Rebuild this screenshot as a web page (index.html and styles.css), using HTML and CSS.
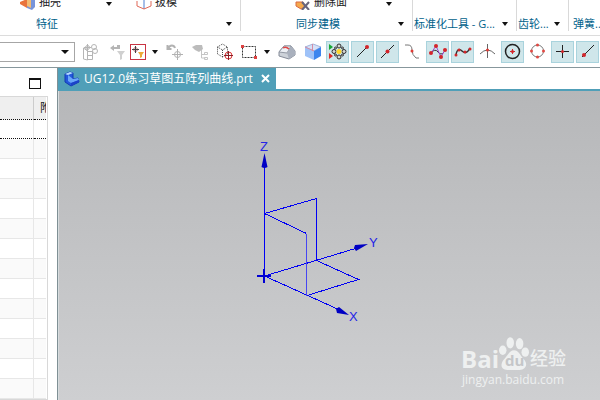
FILE: index.html
```html
<!DOCTYPE html>
<html lang="zh-CN">
<head>
<meta charset="utf-8">
<title>UG12.0练习草图五阵列曲线.prt</title>
<link rel="stylesheet" href="styles.css">
</head>
<body>
<header class="ribbon">
  <section class="group features">
    <div class="commands">
      <button class="command"><svg width="16" height="16" viewBox="0 0 16 16"><path d="M0 8l7-3v9l-7-4z" fill="#e9743c"/><path d="M7 5h8v8l-3 3-5-2z" fill="#7894da"/><path d="M7 6h4v8l-4-2z" fill="#f3bc72"/></svg>抽壳</button>
      <button class="caret" aria-label="抽壳选项"></button>
      <button class="command"><svg width="16" height="16" viewBox="0 0 16 16" fill="none"><path d="M8 5v10" stroke="#4b7ed2"/><path d="M1 7v5l7 3 7-3V7" stroke="#e06858"/></svg>拔模</button>
    </div>
    <div class="caption"><h2>特征</h2><button class="caret" aria-label="特征选项"></button></div>
  </section>
  <section class="group sync">
    <div class="commands">
      <button class="command"><svg width="16" height="16" viewBox="0 0 16 16"><path d="M1 8h7l2 5-4 2-5-3z" fill="#f5a94c" stroke="#d96843"/><path d="M7 8l7 8M14 8l-7 8" stroke="#69657c" stroke-width="2"/></svg>删除面</button>
      <button class="caret" aria-label="删除面选项"></button>
    </div>
    <div class="caption"><h2>同步建模</h2><button class="caret" aria-label="同步建模选项"></button></div>
  </section>
  <section class="group standard"><div class="caption"><h2>标准化工具 - G...</h2><button class="caret" aria-label="标准化工具选项"></button></div></section>
  <section class="group gears"><div class="caption"><h2>齿轮...</h2><button class="caret" aria-label="齿轮选项"></button></div></section>
  <section class="group springs"><div class="caption"><h2>弹簧...</h2></div></section>
</header>

<nav class="toolbar" aria-label="选择条">
  <div class="picker"><select aria-label="选择范围"><option></option></select></div>
  <button class="tool" aria-label="装配"><svg width="18" height="18" viewBox="0 0 18 18" fill="none" stroke="#b5b5b5"><path d="M2.500 5v11l4 1V8zM6.500 8.500h5v8h-5M6.500 12.500h5M6.500 1v7M3 4.500h7"/><circle cx="6.500" cy="4.500" r="2"/><circle cx="13" cy="4" r="2.500"/><circle cx="14" cy="8" r="2.500"/></svg></button>
  <button class="tool" aria-label="重置过滤器"><svg width="18" height="18" viewBox="0 0 18 18"><path d="M2 5l4-3v2h3V2h3v4H6v2z" fill="#b5b5b5"/><path d="M9 8h8l-3 4v4l-2 1v-5z" fill="#d0d0d0"/></svg></button>
  <button class="tool" aria-label="选择过滤器"><svg width="16" height="16" viewBox="0 0 16 16"><rect x="0.500" y="0.500" width="15" height="15" fill="#fff" stroke="#c93443"/><circle cx="5.500" cy="5.500" r="2" fill="none" stroke="#c98088"/><path d="M5.500 2v7M2 5.500h7" stroke="#444"/><path d="M8 8h6l-2 3v2l-2 1v-3z" fill="#edaa39"/></svg></button>
  <button class="caret" aria-label="过滤器选项"></button>
  <button class="tool" aria-label="移动点"><svg width="18" height="18" viewBox="0 0 18 18" fill="none" stroke="#b2b2b2"><path d="M1.500 2v4h4M2 6c2-5 6-4 7-1" stroke-width="2"/><circle cx="11.500" cy="11.500" r="3"/><path d="M11.500 6v11M6 11.500h11"/></svg></button>
  <button class="tool" aria-label="导航器中查找"><svg width="18" height="18" viewBox="0 0 18 18"><path d="M1 4l4-2h6l1 4-4 3-4-2z" fill="#bcbcbc"/><path d="M10.500 7v8h4M10.500 11.500h4M13.500 9.500h3v2h-3zM13.500 14.500h3v2h-3z" fill="none" stroke="#c5c5c5"/></svg></button>
  <button class="tool" aria-label="实体中心"><svg width="18" height="18" viewBox="0 0 18 18" fill="none"><path d="M1.500 4l5-3 5 3v7l-5 3-5-3zM1.500 4l5 3 5-3M6.500 7v7" stroke="#444" stroke-dasharray="1 1"/><circle cx="12.500" cy="12.500" r="3.500" stroke="#dc3333"/><path d="M12.500 8v9M8 12.500h9" stroke="#8c2028"/></svg></button>
  <button class="tool" aria-label="矩形选择"><svg width="18" height="16" viewBox="0 0 18 16" fill="none"><path d="M2.500 2.500h13v11h-13z" stroke="#333" stroke-dasharray="2 1"/><path d="M1 1h3v3H1zM14 12h3v3h-3z" fill="#dd4141"/></svg></button>
  <button class="caret" aria-label="选择方式"></button>
  <button class="tool" aria-label="面选择"><svg width="18" height="16" viewBox="0 0 18 16"><path d="M1 8l5-6h7l4 5v4l-6 4-10-3z" fill="#cdd2d9" stroke="#858b98"/><path d="M1 8l5-6h7l-4 7z" fill="#eceff4" stroke="#9298a4"/><path d="M9 9l4-7 4 5v4l-6 4z" fill="#a9b0bd"/><path d="M5 4q3-2 6 1" fill="none" stroke="#df4747" stroke-width="1.500"/></svg></button>
  <button class="tool" aria-label="实体显示"><svg width="18" height="18" viewBox="0 0 18 18"><path d="M1 4l8-3 8 3-7 4z" fill="#d6e1f8" stroke="#a2b5dd"/><path d="M1 4l9 4v9l-9-4z" fill="#9ec2f8"/><path d="M17 4l-7 4v9l7-4z" fill="#3d85ee"/><path d="M8.500 1v7M1 4l9 4" fill="none" stroke="#d58ca3"/></svg></button>
  <div class="snaps">
    <button class="snap on" aria-label="启用捕捉点"><svg width="19" height="19" viewBox="0 0 19 19"><path d="M1 2l4 3-4 3z" fill="#16a832"/><path d="M1 11l4 3-4 3z" fill="#e02724"/><g fill="#d5d6d2" stroke="#303030"><circle cx="11" cy="4" r="2"/><circle cx="6" cy="9.500" r="2"/><circle cx="16" cy="9.500" r="2"/><circle cx="11" cy="15" r="2"/><circle cx="7.500" cy="6" r="1"/><circle cx="14.500" cy="6" r="1"/><circle cx="7.500" cy="13" r="1"/><circle cx="14.500" cy="13" r="1"/></g><circle cx="11" cy="9.500" r="2.500" fill="#ffd72b"/></svg></button>
    <button class="snap on" aria-label="端点"><svg width="19" height="19" viewBox="0 0 19 19"><path d="M4 15L14 5" stroke="#222"/><circle cx="14" cy="5" r="2" fill="#d3252a"/></svg></button>
    <button class="snap on" aria-label="中点"><svg width="19" height="19" viewBox="0 0 19 19"><path d="M3 16L16 3" stroke="#222"/><circle cx="9.500" cy="9.500" r="2" fill="#d3252a"/></svg></button>
    <button class="snap" aria-label="控制点"><svg width="19" height="19" viewBox="0 0 19 19"><path d="M2 3h3q4 0 4 5t4 8h3" fill="none" stroke="#777"/><circle cx="9" cy="9" r="1.500" fill="#df3a34"/></svg></button>
    <button class="snap on" aria-label="极点"><svg width="19" height="19" viewBox="0 0 19 19"><path d="M3 11Q7 6 10 10t6 0" fill="none" stroke="#333"/><path d="M3 11l5-7 5 11 4-7" fill="none" stroke="#a344d1"/><g fill="#d3252a"><circle cx="3" cy="11" r="2"/><circle cx="8" cy="4" r="2"/><circle cx="13" cy="15" r="2"/><circle cx="17" cy="8" r="2"/></g></svg></button>
    <button class="snap on" aria-label="样条点"><svg width="19" height="19" viewBox="0 0 19 19"><path d="M3 13C4 6 7 7 9 9s5 3 8-3" fill="none" stroke="#333" stroke-width="1.500"/><g fill="#d3252a"><circle cx="3" cy="13" r="1.500"/><circle cx="6" cy="8" r="1.500"/><circle cx="12" cy="10" r="1.500"/><circle cx="17" cy="7" r="1.500"/></g></svg></button>
    <button class="snap" aria-label="交点"><svg width="19" height="19" viewBox="0 0 19 19"><path d="M2 12Q9.500 4 17 12M9.500 2v14" fill="none" stroke="#666"/><circle cx="9.500" cy="8" r="1.500" fill="#df3a34"/></svg></button>
    <button class="snap on" aria-label="圆弧中心"><svg width="19" height="19" viewBox="0 0 19 19"><circle cx="9.500" cy="9.500" r="7" fill="none" stroke="#222" stroke-width="1.500"/><path d="M7 9.500h5M9.500 7v5" stroke="#d3252a"/><circle cx="9.500" cy="9.500" r="1.500" fill="#d3252a"/></svg></button>
    <button class="snap" aria-label="象限点"><svg width="19" height="19" viewBox="0 0 19 19"><circle cx="9.500" cy="9" r="6" fill="none" stroke="#777"/><g fill="#df4943"><circle cx="9.500" cy="3" r="1.500"/><circle cx="3.500" cy="9" r="1.500"/><circle cx="15.500" cy="9" r="1.500"/><circle cx="9.500" cy="15" r="1.500"/></g></svg></button>
    <button class="snap on" aria-label="现有点"><svg width="19" height="19" viewBox="0 0 19 19"><path d="M3 9.500h13M9.500 3v13" stroke="#222"/><circle cx="9.500" cy="9.500" r="1.500" fill="#d3252a"/></svg></button>
    <button class="snap on" aria-label="曲线上的点"><svg width="19" height="19" viewBox="0 0 19 19"><path d="M4 15L16 3" stroke="#222"/><circle cx="6" cy="13" r="2" fill="#d3252a"/></svg></button>
  </div>
</nav>

<main class="workspace">
  <aside class="panel">
    <div class="panel-bar"><button class="maximize" aria-label="最大化"></button></div>
    <div class="table-frame">
      <table>
        <thead><tr><th></th><th>附</th></tr></thead>
        <tbody>
          <tr class="focused"><td></td><td></td></tr>
          <tr><td></td><td></td></tr><tr><td></td><td></td></tr><tr><td></td><td></td></tr><tr><td></td><td></td></tr>
          <tr><td></td><td></td></tr><tr><td></td><td></td></tr><tr><td></td><td></td></tr><tr><td></td><td></td></tr>
          <tr><td></td><td></td></tr><tr><td></td><td></td></tr><tr><td></td><td></td></tr><tr><td></td><td></td></tr>
          <tr><td></td><td></td></tr><tr><td></td><td></td></tr>
        </tbody>
      </table>
    </div>
  </aside>
  <section class="document">
    <div class="tabs">
      <div class="tab">
        <svg width="16" height="16" viewBox="0 0 16 16"><path d="M1 3l5-2 3 1v6l5-1 1 4-8 4-6-4z" fill="#2358dc" stroke="#123bb2"/><path d="M1 3l5-2 3 1-5 2z" fill="#b7dcff"/><path d="M4 4v6l3 2 8-3-1-2-5 1" fill="#69a7f9"/><path d="M7 12l8-3v2l-8 4z" fill="#1c43c8"/></svg>
        <span>UG12.0练习草图五阵列曲线.prt</span>
        <button class="close" aria-label="关闭"><svg width="9" height="9" viewBox="0 0 9 9"><path d="M1 1l7 7M8 1L1 8" stroke="#fff" stroke-width="2"/></svg></button>
      </div>
    </div>
    <div class="canvas">
      <svg class="model" width="541" height="309" viewBox="59 91 541 309" role="img" aria-label="坐标系">
        <g fill="none" stroke="#0000f4" shape-rendering="crispEdges">
          <path d="M264.500 276V160M264.500 276L362 246.500M264.500 276L342 311"/>
          <path d="M264.500 213.500L316.500 198.500V260.500L358.500 279.500L307 295.500M264.500 213.500L306.500 233.500"/>
          <path d="M306.500 233.500V295.500" stroke="#4646f2"/>
          <path d="M257 276h14M264 269v14" stroke-width="2" stroke="#0000d4"/>
        </g>
        <g fill="#0000c4">
          <path d="M264.500 153l3 14q-3 2-6 0z"/>
          <path d="M368 244l-13 1-1 3 2 3z"/>
          <path d="M349 315l-10-8-3 2 1 4z"/>
        </g>
        <g class="axis-labels"><text x="260" y="151">Z</text><text x="369" y="247">Y</text><text x="349" y="321">X</text></g>
      </svg>
      <div class="watermark">
        <div class="brand"><span>Bai</span><span class="paw"><svg width="30" height="34" viewBox="0 0 32 36"><g fill="#eef0f0"><ellipse cx="4" cy="14" rx="4" ry="5"/><ellipse cx="12" cy="6" rx="4" ry="6"/><ellipse cx="22" cy="7" rx="4" ry="6"/><ellipse cx="28" cy="16" rx="4" ry="5"/><path d="M16 14c5 0 6 5 10 9 6 6 2 12-4 12H9C2 35 1 29 5 24c4-4 6-10 11-10z"/></g></svg><b>du</b></span><span class="name">经验</span></div>
        <div class="site">jingyan.baidu.com</div>
      </div>
    </div>
  </section>
</main>
</body>
</html>
```
FILE: styles.css
```css
* { box-sizing: border-box; }

body {
  margin: 0;
  height: 100vh;
  display: flex;
  flex-direction: column;
  overflow: hidden;
  background: #fff;
  color: #222;
  font: 12px/16px "Open Sans", "Noto Sans CJK SC", sans-serif;
}

button {
  display: flex;
  align-items: center;
  justify-content: center;
  flex: none;
  margin: 0;
  padding: 0;
  border: 0;
  background: none;
  color: inherit;
  font: inherit;
}

svg { display: block; flex: none; }

.caret { width: 14px; height: 12px; }
.caret::before {
  content: "";
  border: 3px solid transparent;
  border-top: 4px solid #111;
  border-bottom: 0;
}

/* Ribbon */
.ribbon {
  display: grid;
  grid-template-columns: 241px 172px 104px 52px 1fr;
  height: 36px;
  flex: none;
  padding-bottom: 4px;
  border-bottom: 1px solid #dcdcdc;
  overflow: hidden;
}
.group {
  display: flex;
  flex-direction: column;
  justify-content: flex-end;
  min-width: 0;
  border-right: 1px solid #d9d9d9;
}
.group:last-child { border-right: 0; }
.commands { display: flex; align-items: flex-end; height: 9px; margin-bottom: 7px; }
.command { gap: 3px; height: 16px; font-size: 11px; line-height: 16px; }
.features .commands { padding-left: 20px; }
.features .commands .caret { margin: 0 20px 0 41px; }
.sync .commands { padding-left: 54px; }
.sync .commands .caret { margin-left: 35px; }
.caption { display: flex; align-items: center; height: 14px; }
.caption h2 {
  flex: 1;
  margin: 0;
  color: #00618a;
  font-size: 11px;
  font-weight: 400;
  line-height: 14px;
  white-space: nowrap;
}
.caption .caret { margin-right: 4px; }
.features h2 { padding-left: 36px; }
.sync h2 { padding-left: 55px; }
.standard h2, .gears h2 { padding-left: 1px; }
.springs h2 { padding-left: 4px; }

/* Selection bar */
.toolbar {
  display: grid;
  grid-template-columns: 75px 30px 23px 20px 14px 26px 24px 25px 23px 14px 26px 26px 1fr;
  align-items: center;
  justify-items: center;
  height: 32px;
  flex: none;
  border-bottom: 1px solid #87979c;
}
.picker { position: relative; width: 100%; }
.picker select {
  display: block;
  width: 100%;
  height: 20px;
  appearance: none;
  border: 1px solid #a6a6a6;
  border-left: 0;
  border-radius: 0;
  background: #fff;
}
.picker::after {
  content: "";
  position: absolute;
  right: 6px;
  top: 8px;
  border: 4px solid transparent;
  border-top-color: #111;
  border-bottom: 0;
  pointer-events: none;
}
.snaps { display: flex; gap: 2px; justify-self: start; }
.snap { width: 23px; height: 22px; border: 1px solid transparent; }
.snap.on { background: #cfe6ea; border-color: #a9d3dd; }

/* Workspace */
.workspace {
  display: grid;
  grid-template-columns: 57px 1fr;
  flex: 1;
  min-height: 0;
}
.panel { display: flex; flex-direction: column; min-height: 0; overflow: hidden; }
.panel-bar {
  display: flex;
  align-items: center;
  justify-content: flex-end;
  height: 28px;
  flex: none;
  padding: 2px 16px 0 0;
}
.maximize { width: 12px; height: 11px; border: 1px solid #111; border-top-width: 2px; }
.table-frame {
  flex: 1;
  min-height: 0;
  margin-right: 9px;
  padding-right: 1px;
  border: 1px solid #d8d8d8;
  border-left: 0;
  overflow: hidden;
}
table { width: 100%; table-layout: fixed; border-collapse: separate; border-spacing: 0; }
th, td { height: 20px; padding: 0; border-bottom: 1px solid #e7e7e7; }
th:first-child, td:first-child { width: 34px; border-right: 1px solid #e7e7e7; }
th {
  height: 23px;
  padding-left: 6px;
  overflow: hidden;
  border-bottom: 1px dotted #111;
  background: #efefef;
  font-weight: 400;
  text-align: left;
  line-height: 16px;
}
th:first-child { border-right-color: #ccc; }
.focused td { height: 19px; border-bottom: 1px dotted #111; }
tbody tr:nth-child(even) { background: #fafafa; }

.document {
  display: flex;
  flex-direction: column;
  min-width: 0;
  border-left: 1px solid #7f9095;
}
.tabs { display: flex; flex: none; border-bottom: 2px solid #509fb8; }
.tab {
  display: flex;
  align-items: center;
  height: 21px;
  padding: 0 6px;
  background: #509fb8;
  color: #fff;
  white-space: nowrap;
}
.tab span { margin: 0 8px 0 4px; }
.canvas {
  position: relative;
  flex: 1;
  min-height: 0;
  overflow: hidden;
  border-left: 1px solid #d7dcde;
  background: linear-gradient(#b6b7b9, #cecfd1);
}
.axis-labels { fill: #2525e6; font: 13px "Liberation Sans", sans-serif; }

.watermark { position: absolute; right: 34px; bottom: 11px; color: #eef0f0; }
.brand { display: flex; align-items: flex-end; height: 36px; }
.brand > span:first-child { font: bold 24px/24px "Open Sans", sans-serif; }
.paw { position: relative; }
.paw b {
  position: absolute;
  left: 6px;
  bottom: 2px;
  color: #c4c6c8;
  font: bold 15px/18px "Open Sans", sans-serif;
}
.name { margin-left: 1px; font-size: 18px; font-weight: 500; line-height: 26px; }
.site { padding-left: 1px; font-size: 12px; line-height: 18px; }
```
